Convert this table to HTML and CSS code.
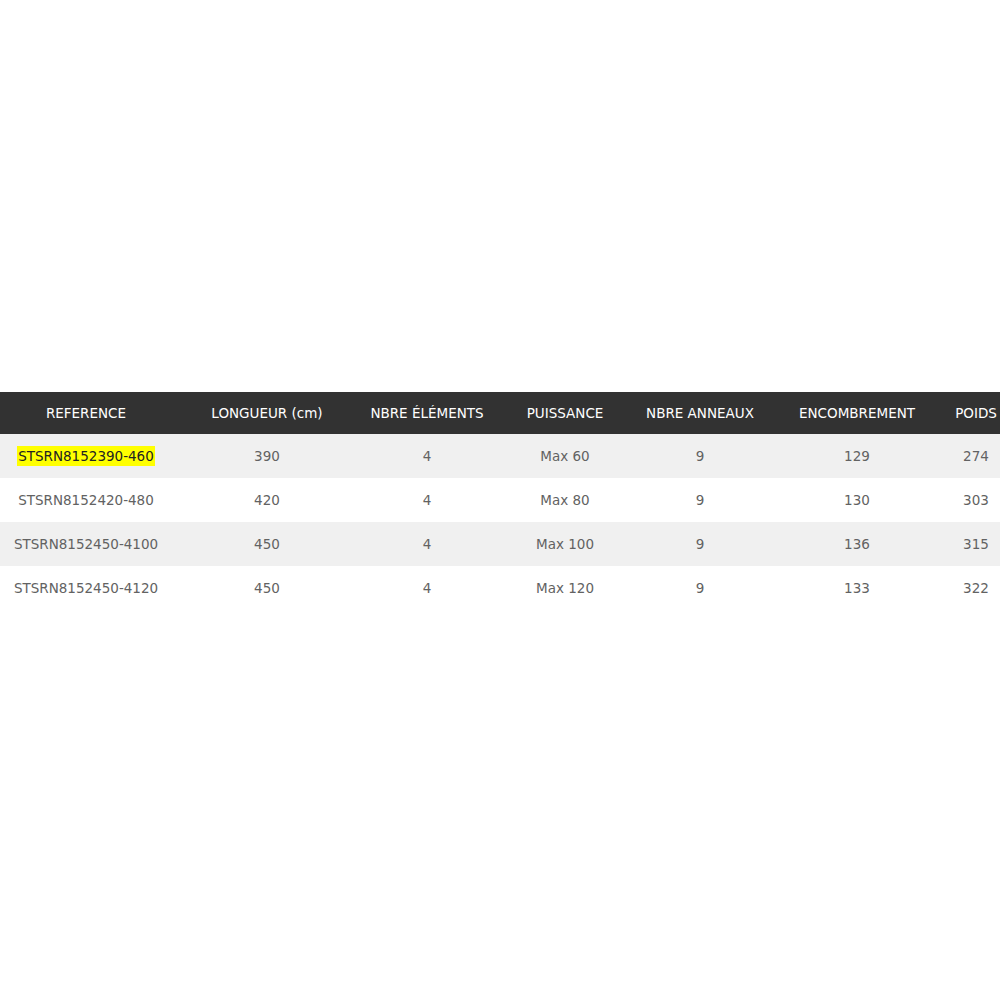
FILE: index.html
```html
<!DOCTYPE html>
<html>
<head>
<meta charset="utf-8">
<link rel="stylesheet" href="styles.css">
</head>
<body>
<div class="page">
  <table class="spec">
    <colgroup>
      <col class="c-ref"><col class="c-len"><col class="c-el"><col class="c-pow"><col class="c-ring"><col class="c-enc"><col class="c-w">
    </colgroup>
    <thead>
      <tr>
        <th>REFERENCE</th>
        <th>LONGUEUR (cm)</th>
        <th>NBRE ÉLÉMENTS</th>
        <th>PUISSANCE</th>
        <th>NBRE ANNEAUX</th>
        <th>ENCOMBREMENT</th>
        <th>POIDS</th>
      </tr>
    </thead>
    <tbody>
      <tr class="alt">
        <td><span class="hl">STSRN8152390-460</span></td><td>390</td><td>4</td><td>Max 60</td><td>9</td><td>129</td><td>274</td>
      </tr>
      <tr>
        <td>STSRN8152420-480</td><td>420</td><td>4</td><td>Max 80</td><td>9</td><td>130</td><td>303</td>
      </tr>
      <tr class="alt">
        <td>STSRN8152450-4100</td><td>450</td><td>4</td><td>Max 100</td><td>9</td><td>136</td><td>315</td>
      </tr>
      <tr>
        <td>STSRN8152450-4120</td><td>450</td><td>4</td><td>Max 120</td><td>9</td><td>133</td><td>322</td>
      </tr>
    </tbody>
  </table>
</div>
</body>
</html>
```
FILE: styles.css
```css
html, body {
  margin: 0;
  padding: 0;
  background: #ffffff;
}
.page {
  padding-top: 392px;
  width: 1000px;
  overflow: hidden;
}
.spec {
  border-collapse: collapse;
  table-layout: fixed;
  width: 1000px;
  font-family: "DejaVu Sans", Verdana, sans-serif;
  font-size: 13.5px;
}
.c-ref { width: 172px; }
.c-len { width: 190px; }
.c-el { width: 130px; }
.c-pow { width: 146px; }
.c-ring { width: 124px; }
.c-enc { width: 190px; }
.c-w { width: 48px; }
.spec th {
  background: #323232;
  color: #ffffff;
  font-weight: normal;
  height: 42px;
  padding: 0;
  text-align: center;
  white-space: nowrap;
  overflow: visible;
}
.spec td {
  height: 44px;
  padding: 0;
  text-align: center;
  color: #626262;
  white-space: nowrap;
  overflow: visible;
}
.spec tr.alt td {
  background: #f0f0f0;
}
.hl {
  background: #ffff00;
  color: #222222;
  padding: 2px 1px;
}
```
